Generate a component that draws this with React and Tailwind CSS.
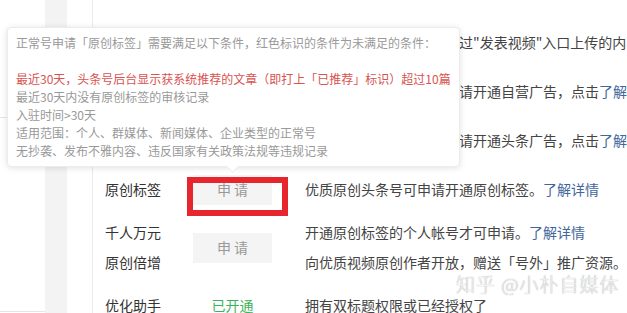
import React from 'react';

const font = { fontFamily: '"Noto Sans CJK SC", "Noto Sans", sans-serif' };

const Link = ({ children }) => <span className="text-[#3f679c]">{children}</span>;

const ApplyButton = () => (
    <div className="w-[79px] h-[30px] bg-[#f4f4f4] text-[#999] text-[14px] flex items-center justify-center">申 请</div>
);

const Row = ({ label, action, children, className = 'h-[49px]' }) => (
    <div className={`grid grid-cols-[88px_112px_1fr] items-center ${className}`}>
        <div className="text-[#333] whitespace-nowrap">{label}</div>
        <div>{action}</div>
        <div className="text-[#444] whitespace-nowrap">{children}</div>
    </div>
);

const App = () => {
    return (
        <div className="relative w-[627px] h-[313px] overflow-hidden bg-white flex text-[14px]" style={font}>
            {/* left sidebar strips */}
            <div className="w-[45px] shrink-0 h-full relative">
                <div className="absolute left-0 right-0 top-[117px] border-t border-[#e6e6e6]" />
                <div className="absolute left-0 right-0 top-[311px] border-t border-[#e6e6e6]" />
            </div>
            <div className="w-[22px] shrink-0 h-full bg-[#f3f3f3]" />
            <div className="w-[26px] shrink-0 h-full border-r border-[#ebebeb]" />

            {/* main list */}
            <div className="flex-1 min-w-0 pl-[12px] pt-[18px]">
                <Row label="原创视频" action={null}>视频原创标签账号需要通过"发表视频"入口上传的内容</Row>
                <Row label="自营广告" action={null}>通过审核的头条号可以申请开通自营广告，点击<Link>了解详情</Link></Row>
                <Row label="头条广告" action={null}>通过审核的头条号可以申请开通头条广告，点击<Link>了解详情</Link></Row>
                <Row label="原创标签" action={<ApplyButton />}>优质原创头条号可申请开通原创标签。<Link>了解详情</Link></Row>
                <div className="grid grid-cols-[88px_112px_1fr] items-center h-[67px]">
                    <div className="text-[#333] flex flex-col gap-[9px]">
                        <span>千人万元</span>
                        <span>原创倍增</span>
                    </div>
                    <div><ApplyButton /></div>
                    <div className="text-[#444] flex flex-col gap-[9px] whitespace-nowrap">
                        <span>开通原创标签的个人帐号才可申请。<Link>了解详情</Link></span>
                        <span>向优质视频原创作者开放，赠送「号外」推广资源。</span>
                    </div>
                </div>
                <Row label="优化助手" action={<div className="w-[79px] text-center text-[#3cb35a]">已开通</div>}>
                    拥有双标题权限或已经授权了
                </Row>
            </div>

            {/* tooltip */}
            <div className="absolute left-[7px] top-[27px] w-[453px] bg-white rounded-[4px] border border-[#ececec] shadow-[0_1px_6px_rgba(0,0,0,0.12)] px-[8px] py-[6px] text-[12px] leading-[18px] text-[#999]">
                <div className="whitespace-nowrap">正常号申请「原创标签」需要满足以下条件，红色标识的条件为未满足的条件：</div>
                <div className="h-[18px]" />
                <div className="whitespace-nowrap text-[#d9534f]">最近30天，头条号后台显示获系统推荐的文章（即打上「已推荐」标识）超过10篇</div>
                <div>最近30天内没有原创标签的审核记录</div>
                <div>入驻时间&gt;30天</div>
                <div>适用范围：个人、群媒体、新闻媒体、企业类型的正常号</div>
                <div>无抄袭、发布不雅内容、违反国家有关政策法规等违规记录</div>
                <div className="absolute left-[220px] -bottom-[5px] w-[9px] h-[9px] bg-white rotate-45 border-r border-b border-[#ececec]" />
            </div>

            {/* annotation box */}
            <div className="absolute left-[187px] top-[177px] w-[101px] h-[39px] border-[6px] border-[#e6262c]" />

            {/* watermark */}
            <div className="absolute left-[456px] top-[270px] text-[19px] font-light tracking-[1px] text-[#f4f4f4] [text-shadow:0_0_1px_#8a8a8a] whitespace-nowrap">
                知乎 @小朴自媒体
            </div>
        </div>
    );
};

export default App;
